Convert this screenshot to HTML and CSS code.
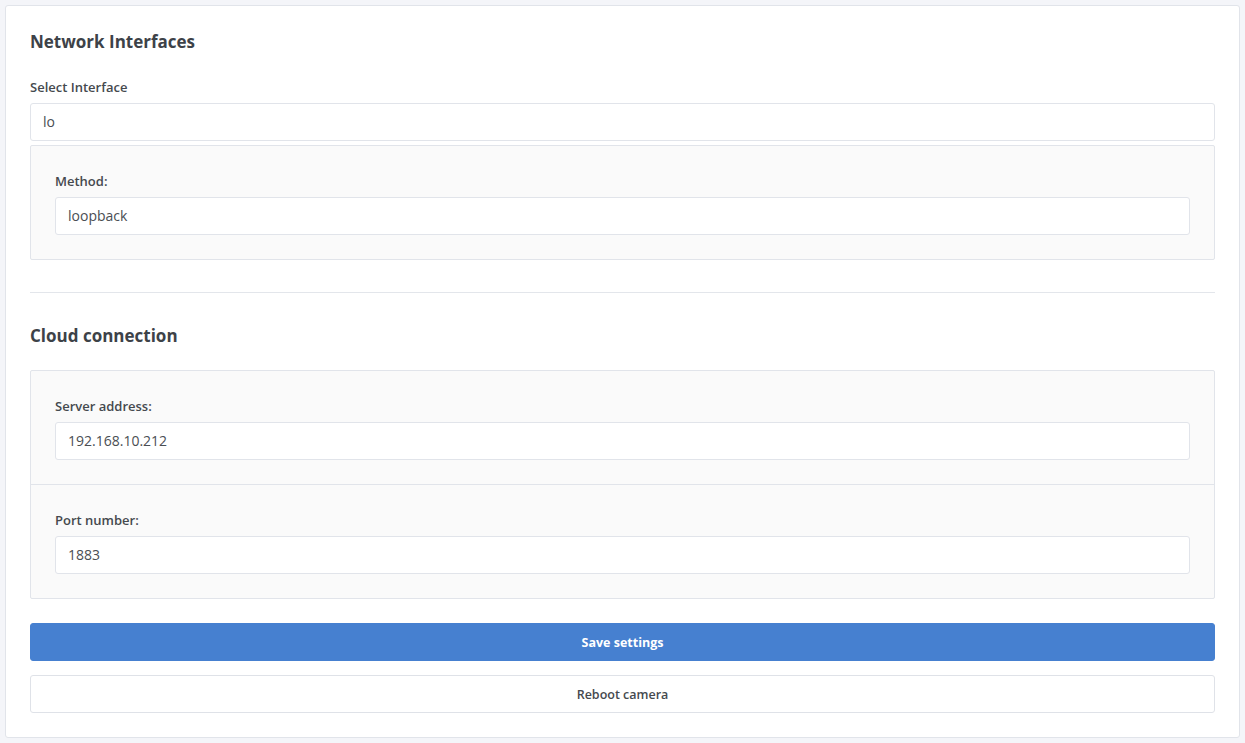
FILE: index.html
```html
<!DOCTYPE html>
<html>
<head>
<meta charset="UTF-8">
<title>Camera settings</title>
<link rel="stylesheet" href="styles.css">
</head>
<body>
	<div class="card">
		<h2>Network Interfaces</h2>
		<label class="lbl">Select Interface</label>
		<div class="field">lo</div>
		<div class="panel">
			<div class="panel-row">
				<label class="lbl">Method:</label>
				<div class="field">loopback</div>
			</div>
		</div>

		<hr>

		<h2 class="second">Cloud connection</h2>
		<div class="panel">
			<div class="panel-row">
				<label class="lbl">Server address:</label>
				<div class="field">192.168.10.212</div>
			</div>
			<div class="panel-row">
				<label class="lbl">Port number:</label>
				<div class="field">1883</div>
			</div>
		</div>

		<button class="btn primary">Save settings</button>
		<button class="btn">Reboot camera</button>
	</div>
</body>
</html>
```
FILE: styles.css
```css
body {
	margin: 0;
	padding: 5px;
	background: #f4f5f9;
	font-family: "Open Sans", "Noto Sans", sans-serif;
	color: #3d4248;
}
.card {
	background: #fff;
	border: 1px solid #e1e4ea;
	border-radius: 3px;
	padding: 24px 24px 24px 24px;
	display: flex;
	flex-direction: column;
}
h2 {
	margin: 0;
	padding-top: 1px;
	font-size: 17px;
	font-weight: 700;
	line-height: 22px;
	margin-bottom: 26px;
}
h2.second {
	margin-bottom: 19px;
}
.lbl {
	display: block;
	font-size: 13px;
	font-weight: 600;
	line-height: 16px;
	margin-bottom: 8px;
	color: #45494e;
}
.field {
	height: 36px;
	border: 1px solid #e1e4ea;
	border-radius: 3px;
	background: #fff;
	padding: 0 12px;
	font-size: 14px;
	line-height: 36px;
	color: #4a4e53;
}
.panel {
	margin-top: 4px;
	background: #fafafa;
	border: 1px solid #e1e4ea;
	border-radius: 2px;
}
.panel-row {
	padding: 27px 24px 24px 24px;
}
.panel-row + .panel-row {
	border-top: 1px solid #e1e4ea;
}
hr {
	border: 0;
	border-top: 1px solid #e3e6eb;
	margin: 32px 0 31px 0;
}
.btn {
	height: 38px;
	font-family: inherit;
	font-size: 12.5px;
	font-weight: 600;
	border: 1px solid #dfe2e8;
	border-radius: 3px;
	background: #fff;
	color: #45494e;
	margin-top: 14px;
}
.btn.primary {
	margin-top: 24px;
	background: #4680d0;
	border-color: #4680d0;
	color: #fff;
	font-weight: 700;
}
```
